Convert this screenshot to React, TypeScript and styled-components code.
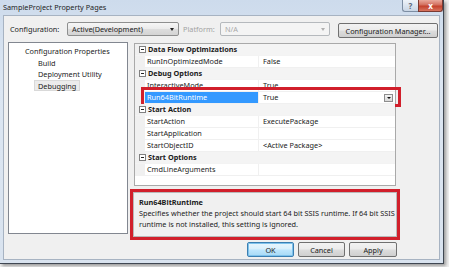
import React from 'react';
import styled, { createGlobalStyle, css } from 'styled-components';

const FONT = `"Noto Sans", "Open Sans", "DejaVu Sans", sans-serif`;

const Global = createGlobalStyle`
  html, body { margin: 0; padding: 0; background: #efefef; }
  body { font-family: ${FONT}; }
  #root { width: 449px; height: 267px; overflow: hidden; }
`;

const Window = styled.div`
  width: 444px;
  height: 264px;
  box-sizing: border-box;
  display: flex;
  flex-direction: column;
  background: linear-gradient(180deg, #cddbec 0%, #dce6f2 30%, #d9e3ef 100%);
  border-right: 1px solid #3f4752;
  border-bottom: 1px solid #3f4752;
  box-shadow: 2px 2px 3px rgba(0, 0, 0, 0.35);
  font-family: ${FONT};
  font-size: 7.3px;
  color: #1b1b1b;
`;

const TitleBar = styled.div`
  height: 15px;
  flex: none;
  display: flex;
  align-items: flex-start;
  padding-left: 3px;
`;

const Title = styled.span`
  line-height: 14px;
  color: #1e1e1e;
  white-space: nowrap;
`;

const Captions = styled.div`
  margin-left: auto;
  display: flex;
`;

const CaptionButton = styled.div<{ $close?: boolean }>`
  height: 12px;
  box-sizing: border-box;
  display: flex;
  align-items: center;
  justify-content: center;
  font-size: 8px;
  font-weight: bold;
  border: 1px solid #7d8ea3;
  border-top: none;
  ${(p) =>
    p.$close
      ? css`
          width: 25px;
          color: #fff;
          background: linear-gradient(180deg, #e9a99c 0%, #d26f5e 45%, #c4412c 55%, #d7745f 100%);
          border-color: #7a3a32;
          border-bottom-right-radius: 3px;
        `
      : css`
          width: 16px;
          color: #5a6778;
          background: linear-gradient(180deg, #eef3f9 0%, #dbe4ef 50%, #c9d5e4 100%);
          border-right: none;
          border-bottom-left-radius: 3px;
        `}
`;

const Client = styled.div`
  flex: 1;
  margin: 0 3px 3px 3px;
  background: #f0f0f0;
  border: 1px solid #a7b3c2;
  box-sizing: border-box;
  padding: 5px 0 0 4px;
  display: flex;
  flex-direction: column;
`;

const ConfigRow = styled.div`
  display: flex;
  align-items: center;
  height: 16px;
`;

const Label = styled.span<{ $w: number; $ml?: number; $disabled?: boolean }>`
  width: ${(p) => p.$w}px;
  margin-left: ${(p) => p.$ml ?? 0}px;
  color: ${(p) => (p.$disabled ? '#a3a3a3' : '#1b1b1b')};
  white-space: nowrap;
`;

const Combo = styled.div<{ $w: number; $disabled?: boolean }>`
  width: ${(p) => p.$w}px;
  height: 14px;
  box-sizing: border-box;
  border: 1px solid ${(p) => (p.$disabled ? '#b5b9bd' : '#8e8f8f')};
  border-radius: 2px;
  display: flex;
  align-items: center;
  padding: 0 4px 0 4px;
  color: ${(p) => (p.$disabled ? '#a8a8a8' : '#1b1b1b')};
  background: ${(p) =>
    p.$disabled
      ? '#f4f4f4'
      : 'linear-gradient(180deg, #f6f6f6 0%, #ebebeb 48%, #dddddd 52%, #d4d4d4 100%)'};
  white-space: nowrap;
`;

const Arrow = styled.span<{ $disabled?: boolean }>`
  margin-left: auto;
  width: 0;
  height: 0;
  border-left: 2.5px solid transparent;
  border-right: 2.5px solid transparent;
  border-top: 3px solid ${(p) => (p.$disabled ? '#b0b0b0' : '#222')};
`;

const PushButton = styled.div<{ $w: number; $default?: boolean }>`
  width: ${(p) => p.$w}px;
  height: 15px;
  box-sizing: border-box;
  border: 1px solid ${(p) => (p.$default ? '#3c7fb1' : '#707070')};
  border-radius: 2px;
  display: flex;
  align-items: center;
  justify-content: center;
  white-space: nowrap;
  background: linear-gradient(180deg, #f2f2f2 0%, #ebebeb 48%, #dddddd 52%, #cfcfcf 100%);
  ${(p) =>
    p.$default &&
    css`
      box-shadow: inset 0 0 0 1px #7ec2ec;
      background: linear-gradient(180deg, #eaf6fd 0%, #d9f0fc 48%, #bee6fd 52%, #a7d9f5 100%);
    `}
`;

const ManagerButton = styled(PushButton)`
  margin-left: 8px;
  margin-top: 3px;
`;

const Main = styled.div`
  display: flex;
  margin-top: 5px;
  height: 198px;
`;

const Tree = styled.div`
  width: 120px;
  height: 192px;
  box-sizing: border-box;
  border: 1px solid #828790;
  background: #fff;
  padding-top: 2px;
  display: flex;
  flex-direction: column;
`;

const TreeItem = styled.div<{ $level: number; $selected?: boolean }>`
  align-self: flex-start;
  height: 11.5px;
  line-height: 10px;
  box-sizing: border-box;
  margin-left: ${(p) => (p.$level === 0 ? 12 : 25)}px;
  padding: 0 3px;
  border: 1px solid ${(p) => (p.$selected ? '#d9d9d9' : 'transparent')};
  background: ${(p) => (p.$selected ? '#ececec' : 'transparent')};
  white-space: nowrap;
`;

const RightCol = styled.div`
  margin-left: 2px;
  width: 270px;
  display: flex;
  flex-direction: column;
`;

const Grid = styled.div`
  margin: 1px 4px 0 4px;
  height: 143px;
  box-sizing: border-box;
  border: 1px solid #a9a9a9;
  background: #fff;
  display: flex;
  flex-direction: column;
`;

const Row = styled.div<{ $category?: boolean; $marked?: boolean }>`
  position: relative;
  height: 12px;
  flex: none;
  display: grid;
  grid-template-columns: 10px 114px 1fr;
  box-sizing: border-box;
  border-bottom: 1px solid ${(p) => (p.$category ? '#f3f3f3' : '#f0f0f0')};
  background: ${(p) => (p.$category ? '#f4f4f4' : '#fff')};
  ${(p) =>
    p.$marked &&
    css`
      &::after {
        content: '';
        position: absolute;
        left: 6px;
        right: -6px;
        top: -5px;
        bottom: -4px;
        border: 3px solid #d11f2b;
        pointer-events: none;
      }
    `}
`;

const Margin = styled.div`
  background: #f0f0f0;
  display: flex;
  align-items: center;
  justify-content: flex-end;
`;

const Toggle = styled.span`
  position: relative;
  width: 7px;
  height: 7px;
  box-sizing: border-box;
  border: 1px solid #808080;
  background: #fff;
  margin-right: -1px;
  &::after {
    content: '';
    position: absolute;
    left: 1px;
    right: 1px;
    top: 2px;
    height: 1px;
    background: #222;
  }
`;

const CategoryName = styled.div`
  grid-column: 2 / 4;
  font-weight: bold;
  line-height: 11px;
  padding-left: 3px;
  white-space: nowrap;
`;

const Name = styled.div<{ $selected?: boolean }>`
  line-height: 11px;
  padding-left: 2px;
  white-space: nowrap;
  overflow: hidden;
  border-right: 1px solid #f0f0f0;
  ${(p) =>
    p.$selected &&
    css`
      background: #3399ff;
      color: #fff;
    `}
`;

const Value = styled.div`
  display: flex;
  align-items: center;
  line-height: 11px;
  padding-left: 4px;
  padding-right: 2px;
  white-space: nowrap;
`;

const DropButton = styled.span`
  margin-left: auto;
  width: 9px;
  height: 8px;
  box-sizing: border-box;
  border: 1px solid #8d8d8d;
  background: linear-gradient(180deg, #f4f4f4, #d8d8d8);
  display: flex;
  align-items: center;
  justify-content: center;
  &::after {
    content: '';
    border-left: 2px solid transparent;
    border-right: 2px solid transparent;
    border-top: 2px solid #111;
  }
`;

const DescFrame = styled.div`
  margin-top: 3px;
  height: 51px;
  box-sizing: border-box;
  border: 3px solid #d11f2b;
  display: flex;
`;

const DescPanel = styled.div`
  flex: 1;
  background: #f0f0f0;
  border: 1px solid #b9b9b9;
  padding: 4px 0 0 5px;
  line-height: 11px;
`;

const DescTitle = styled.div`
  font-weight: bold;
`;

const DescLine = styled.div`
  white-space: nowrap;
`;

const ButtonRow = styled.div`
  display: flex;
  justify-content: flex-end;
  gap: 4px;
  margin-top: 2px;
  padding-right: 42px;
`;

type Prop = { kind: 'cat'; name: string } | { kind: 'prop'; name: string; value?: string; selected?: boolean };

const rows: Prop[] = [
  { kind: 'cat', name: 'Data Flow Optimizations' },
  { kind: 'prop', name: 'RunInOptimizedMode', value: 'False' },
  { kind: 'cat', name: 'Debug Options' },
  { kind: 'prop', name: 'InteractiveMode', value: 'True' },
  { kind: 'prop', name: 'Run64BitRuntime', value: 'True', selected: true },
  { kind: 'cat', name: 'Start Action' },
  { kind: 'prop', name: 'StartAction', value: 'ExecutePackage' },
  { kind: 'prop', name: 'StartApplication', value: '' },
  { kind: 'prop', name: 'StartObjectID', value: '<Active Package>' },
  { kind: 'cat', name: 'Start Options' },
  { kind: 'prop', name: 'CmdLineArguments', value: '' },
];

export default function App() {
  return (
    <>
      <Global />
      <Window>
        <TitleBar>
          <Title>SampleProject Property Pages</Title>
          <Captions>
            <CaptionButton>?</CaptionButton>
            <CaptionButton $close>x</CaptionButton>
          </Captions>
        </TitleBar>
        <Client>
          <ConfigRow>
            <Label $w={57} $ml={2}>Configuration:</Label>
            <Combo $w={112}>
              Active(Development)
              <Arrow />
            </Combo>
            <Label $w={37} $ml={4} $disabled>Platform:</Label>
            <Combo $w={110} $disabled>
              N/A
              <Arrow $disabled />
            </Combo>
            <ManagerButton $w={100}>Configuration Manager...</ManagerButton>
          </ConfigRow>
          <Main>
            <Tree>
              <TreeItem $level={0}>Configuration Properties</TreeItem>
              <TreeItem $level={1}>Build</TreeItem>
              <TreeItem $level={1}>Deployment Utility</TreeItem>
              <TreeItem $level={1} $selected>Debugging</TreeItem>
            </Tree>
            <RightCol>
              <Grid>
                {rows.map((r) =>
                  r.kind === 'cat' ? (
                    <Row key={r.name} $category>
                      <Margin>
                        <Toggle />
                      </Margin>
                      <CategoryName>{r.name}</CategoryName>
                    </Row>
                  ) : (
                    <Row key={r.name} $marked={r.selected}>
                      <Margin />
                      <Name $selected={r.selected}>{r.name}</Name>
                      <Value>
                        {r.value}
                        {r.selected && <DropButton />}
                      </Value>
                    </Row>
                  )
                )}
              </Grid>
              <DescFrame>
                <DescPanel>
                  <DescTitle>Run64BitRuntime</DescTitle>
                  <DescLine>Specifies whether the project should start 64 bit SSIS runtime. If 64 bit SSIS</DescLine>
                  <DescLine>runtime is not installed, this setting is ignored.</DescLine>
                </DescPanel>
              </DescFrame>
            </RightCol>
          </Main>
          <ButtonRow>
            <PushButton $w={47} $default>OK</PushButton>
            <PushButton $w={47}>Cancel</PushButton>
            <PushButton $w={48}>Apply</PushButton>
          </ButtonRow>
        </Client>
      </Window>
    </>
  );
}
